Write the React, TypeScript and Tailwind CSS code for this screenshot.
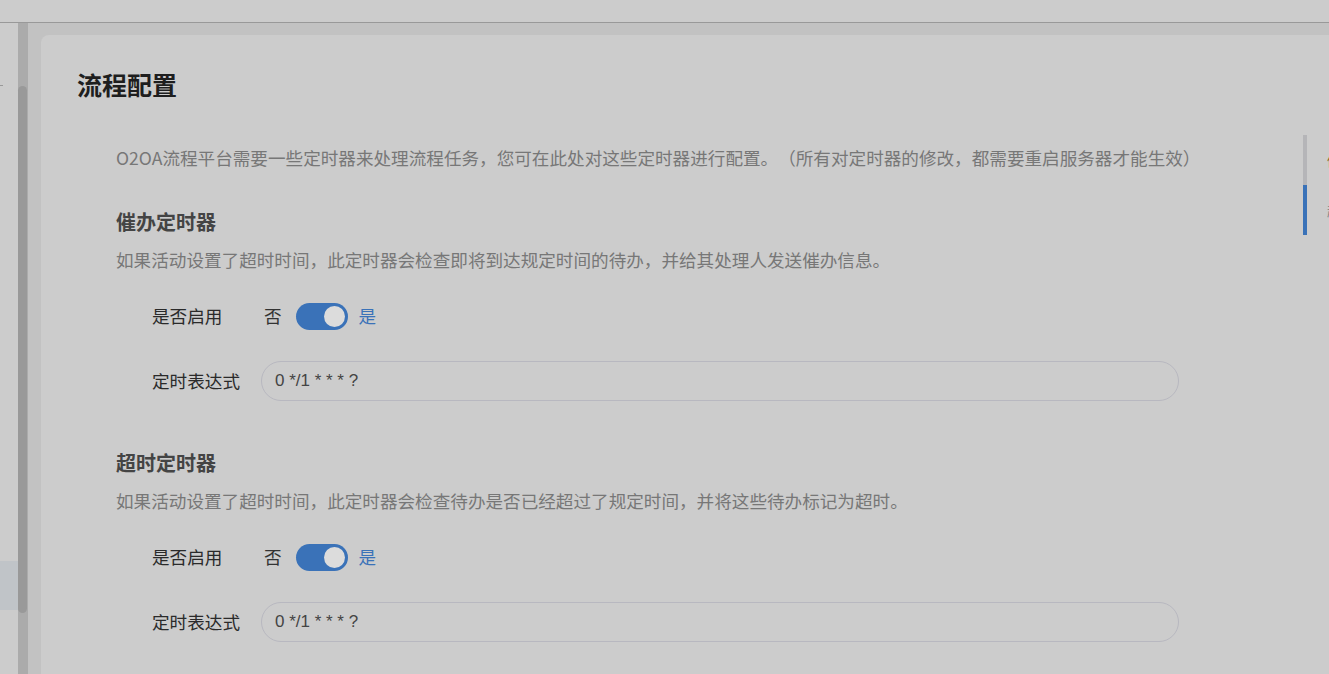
import React from "react"

const cjk = { fontFamily: '"Noto Sans CJK SC", "Noto Sans", sans-serif' }

function Toggle() {
  return (
    <div className="flex items-center ml-[3px]">
      <span className="text-[17.6px] text-[#333] mr-[14px]">否</span>
      <div className="w-[52px] h-[27px] rounded-full bg-[#3a72b8] flex items-center justify-end pr-[3px]">
        <div className="w-[21px] h-[21px] rounded-full bg-[#dcdcdc]" />
      </div>
      <span className="text-[17.6px] text-[#3a72b8] ml-[11px]">是</span>
    </div>
  )
}

function TimerSection({ title, desc, first }: { title: string; desc: string; first?: boolean }) {
  return (
    <div className={first ? "mt-[37px]" : "mt-[48px]"}>
      <div className="text-[20px] leading-[28px] font-bold text-[#444]">{title}</div>
      <div className="mt-[11px] text-[17.6px] leading-[26px] text-[#777]">{desc}</div>
      <div className="mt-[23px] pl-[36px] flex items-center h-[40px]">
        <div className="w-[109px] text-[17.6px] text-[#2a2a2a]">是否启用</div>
        <Toggle />
      </div>
      <div className="mt-[25px] pl-[36px] flex items-center h-[40px]">
        <div className="w-[109px] text-[17.6px] text-[#2a2a2a]">定时表达式</div>
        <div className="w-[918px] h-[40px] rounded-full border border-[#b8b8c0] flex items-center pl-[13px]">
          <span className="text-[17px] text-[#444]" style={{ fontFamily: '"Liberation Sans", Arial, sans-serif' }}>
            0 */1 * * * ?
          </span>
        </div>
      </div>
    </div>
  )
}

export default function App() {
  return (
    <div className="w-[1329px] h-[674px] overflow-hidden bg-[#cccccc] flex flex-col" style={cjk}>
      {/* top bar */}
      <div className="h-[23px] shrink-0 border-b border-[#999]" />

      <div className="flex flex-1 min-h-0">
        {/* left sidebar */}
        <div className="w-[28px] shrink-0 flex">
          <div className="w-[18px] flex flex-col">
            <div className="mt-[62px] w-[3px] h-px bg-[#999]" />
            <div className="mt-[475px] h-[49px] bg-[#c0c4c8]" />
          </div>
          <div className="w-[10px] bg-[#ababab]">
            <div className="mt-[63px] h-[527px] w-[9px] rounded-full bg-[#999]" />
          </div>
        </div>

        {/* main */}
        <div className="flex-1 bg-[#c2c2c2] pt-[12px] pl-[13px] flex min-w-0">
          <div className="relative flex-1 bg-[#cccccc] rounded-tl-[8px] pt-[31px] pl-[36px]">
            <h1 className="text-[25px] leading-[36px] font-bold text-[#1e1e1e]">流程配置</h1>

            <div className="pl-[39px]">
              <div className="mt-[43px] text-[17.6px] leading-[26px] text-[#777] whitespace-nowrap [text-spacing-trim:space-all]">
                O2OA流程平台需要一些定时器来处理流程任务，您可在此处对这些定时器进行配置。（所有对定时器的修改，都需要重启服务器才能生效）
              </div>

              <TimerSection
                first
                title="催办定时器"
                desc="如果活动设置了超时时间，此定时器会检查即将到达规定时间的待办，并给其处理人发送催办信息。"
              />
              <TimerSection
                title="超时定时器"
                desc="如果活动设置了超时时间，此定时器会检查待办是否已经超过了规定时间，并将这些待办标记为超时。"
              />
            </div>

            {/* scroll-spy nav */}
            <div className="absolute left-[1262px] top-[100px] flex">
              <div className="flex flex-col w-[4px]">
                <div className="h-[50px] bg-[#b5b5b8]" />
                <div className="h-[50px] bg-[#3a72b8]" />
              </div>
              <div className="ml-[20px] flex flex-col text-[14px] whitespace-nowrap">
                <div className="h-[50px] flex items-center text-[#8a6a30]">催办定时器</div>
                <div className="h-[50px] flex items-center text-[#888]">超时定时器</div>
              </div>
            </div>
          </div>
        </div>
      </div>
    </div>
  )
}
